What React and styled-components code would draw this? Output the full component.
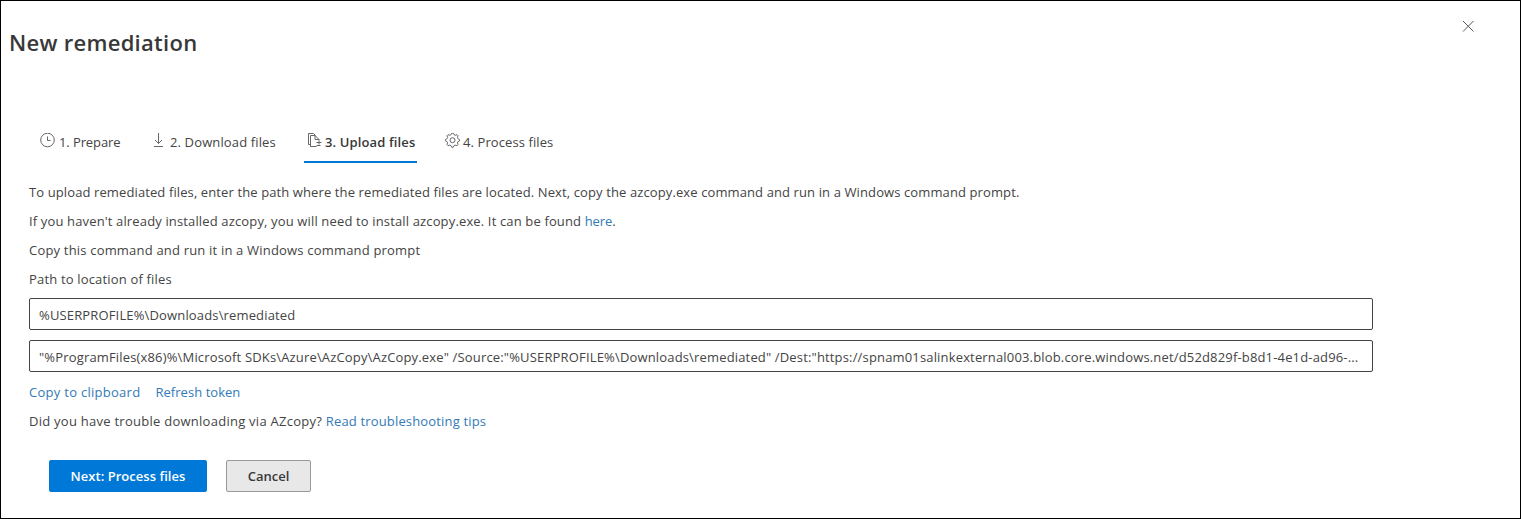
import React from "react";
import styled, { createGlobalStyle, css } from "styled-components";

const GlobalStyle = createGlobalStyle`
  *, *::before, *::after { box-sizing: border-box; }
  body {
    margin: 0;
    background: #fff;
    color: #444;
    font: 13px/20px "Open Sans", "Noto Sans", sans-serif;
  }
`;

const Panel = styled.main`
  width: 1521px;
  height: 519px;
  border: 1px solid #000;
  background: #fff;
  overflow: hidden;
`;

const Header = styled.header`
  display: flex;
  justify-content: space-between;
  height: 122px;
  padding: 17px 44px 0 8px;
`;

const Title = styled.h1`
  margin: 8px 0 0;
  font-size: 22px;
  line-height: 32px;
  height: 32px;
  font-weight: 600;
  color: #383838;
  letter-spacing: ${(p) => p.$track}px;
`;

const CloseButton = styled.button`
  display: flex;
  align-items: center;
  justify-content: center;
  width: 16px;
  height: 16px;
  padding: 0;
  border: 0;
  background: none;
  color: #555;
`;

const Tabs = styled.nav`
  display: flex;
  gap: 22px;
  padding-left: 36px;
  height: 40px;
`;

const Tab = styled.button`
  display: flex;
  align-items: flex-start;
  gap: ${(p) => p.$gap}px;
  width: ${(p) => p.$width}px;
  height: 40px;
  padding: 9px 0 0 3px;
  border: 0;
  border-bottom: 2px solid transparent;
  background: none;
  color: #444;
  font: inherit;
  white-space: nowrap;
  letter-spacing: ${(p) => p.$track}px;
  svg { flex: none; margin-top: 1px; color: #666; }
  ${(p) =>
    p.$active &&
    css`
      margin-right: 3px;
      border-bottom-color: #0078d7;
      font-weight: 600;
      color: #383838;
    `}
`;

const Content = styled.section`
  display: flex;
  flex-direction: column;
  align-items: flex-start;
  padding: 19px 0 0 28px;
`;

const Line = styled.p`
  display: flex;
  gap: ${(p) => p.$gap || 0}px;
  margin: 0 0 9px;
  height: 20px;
  white-space: pre;
`;

const Copy = styled.span`
  letter-spacing: ${(p) => p.$track || 0}px;
`;

const Link = styled.a`
  color: #337ab7;
  text-decoration: none;
  letter-spacing: ${(p) => p.$track || 0}px;
`;

const Field = styled.div`
  width: 1344px;
  height: 32px;
  margin-bottom: 10px;
  padding: 6px 10px 0 9px;
  border: 1px solid #444;
  border-radius: 2px;
  white-space: nowrap;
  overflow: hidden;
  text-overflow: ellipsis;
  letter-spacing: ${(p) => p.$track}px;
`;

const Actions = styled.footer`
  display: flex;
  gap: 19px;
  padding: 20px 0 0 20px;
`;

const Button = styled.button`
  width: ${(p) => p.$width}px;
  height: 32px;
  padding: 0;
  border: 1px solid ${(p) => (p.$primary ? "#0078d7" : "#999")};
  border-radius: 2px;
  background: ${(p) => (p.$primary ? "#0078d7" : "#e8e8e8")};
  color: ${(p) => (p.$primary ? "#fff" : "#383838")};
  font: 600 13px/20px "Open Sans", "Noto Sans", sans-serif;
  letter-spacing: ${(p) => p.$track}px;
  white-space: nowrap;
`;

const Svg = ({ children, width = 15, height = 15 }) => (
  <svg width={width} height={height} viewBox={`0 0 ${width} ${height}`} fill="none" stroke="currentColor" strokeWidth="1">
    {children}
  </svg>
);

const ClockIcon = () => (
  <Svg>
    <circle cx="7.5" cy="7" r="6.8" />
    <path d="M7.5 3.5v4h3" />
  </Svg>
);

const DownloadIcon = () => (
  <Svg width={12}>
    <path d="M5.5 0v10.5M2 7l3.500 3.500L9 7M1 13.500h9" />
  </Svg>
);

const UploadIcon = () => (
  <Svg>
    <path d="M3.500 11.500h-2v-11h5l2 2M9.500 13.500h-6v-11h4.500l4 4v1M8 2.500v4h4M9.500 9.500h5M12 7.500v4M9.500 12.500h4" />
  </Svg>
);

const GEAR_TEETH = Array.from({ length: 32 }, (_, i) => {
  const step = i % 4;
  const radius = step === 1 || step === 2 ? 7.1 : 5.6;
  const angle = ((i - 1.5) / 32) * Math.PI * 2;
  return `${7.5 + radius * Math.cos(angle)},${7.2 + radius * Math.sin(angle)}`;
}).join(" ");

const GearIcon = () => (
  <Svg>
    <polygon points={GEAR_TEETH} />
    <circle cx="7.5" cy="7.2" r="2.5" />
  </Svg>
);

const CloseIcon = () => (
  <Svg width={12} height={12}>
    <path d="M1 1l10.500 10.500M11.500 1L1 11.500" />
  </Svg>
);

export default function App() {
  return (
    <>
      <GlobalStyle />
      <Panel>
        <Header>
          <Title $track={0.28}>New remediation</Title>
          <CloseButton aria-label="Close"><CloseIcon /></CloseButton>
        </Header>
        <Tabs>
          <Tab $width={91} $gap={4} $track={-0.1}><ClockIcon />1. Prepare</Tab>
          <Tab $width={132} $gap={5} $track={0.13}><DownloadIcon />2. Download files</Tab>
          <Tab $width={113} $gap={3} $track={0.13} $active><UploadIcon />3. Upload files</Tab>
          <Tab $width={118} $gap={3} $track={0.09}><GearIcon />4. Process files</Tab>
        </Tabs>
        <Content>
          <Line>
            <Copy $track={0.11}>To upload remediated files, enter the path where the remediated files are located. Next, copy the azcopy.exe command and run in a Windows command prompt.</Copy>
          </Line>
          <Line>
            <Copy $track={0.145}>If you haven't already installed azcopy, you will need to install azcopy.exe. It can be found </Copy>
            <Link $track={-0.1}>here</Link>
            <Copy>.</Copy>
          </Line>
          <Line><Copy $track={0.19}>Copy this command and run it in a Windows command prompt</Copy></Line>
          <Line><Copy $track={0.17}>Path to location of files</Copy></Line>
          <Field $track={0.15}>%USERPROFILE%\Downloads\remediated</Field>
          <Field $track={0.162}>
            "%ProgramFiles(x86)%\Microsoft SDKs\Azure\AzCopy\AzCopy.exe" /Source:"%USERPROFILE%\Downloads\remediated" /Dest:"https://spnam01salinkexternal003.blob.core.windows.net/d52d829f-b8d1-4e1d-ad96-...
          </Field>
          <Line $gap={15}>
            <Link $track={0.28}>Copy to clipboard</Link>
            <Link $track={0.04}>Refresh token</Link>
          </Line>
          <Line>
            <Copy $track={0.26}>Did you have trouble downloading via AZcopy? </Copy>
            <Link $track={0.16}>Read troubleshooting tips</Link>
          </Line>
          <Actions>
            <Button $primary $width={158} $track={0.03}>Next: Process files</Button>
            <Button $width={85} $track={0}>Cancel</Button>
          </Actions>
        </Content>
      </Panel>
    </>
  );
}
